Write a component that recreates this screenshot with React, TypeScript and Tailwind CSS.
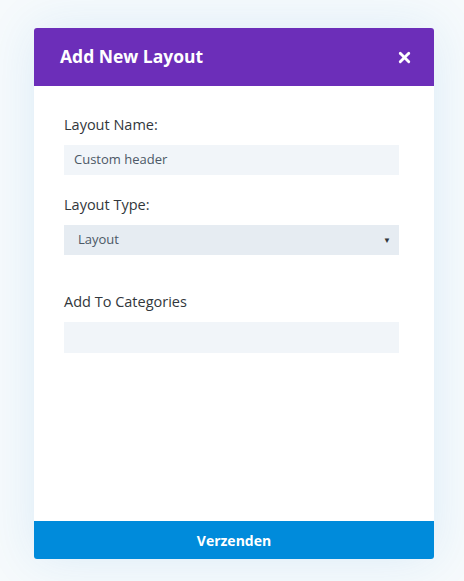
import { X } from "lucide-react";

export default function App() {
  return (
    <div
      className="w-full h-[581px] bg-[#f6fafc] pt-[28px] pl-[34px] overflow-hidden"
      style={{ fontFamily: '"Open Sans", "Noto Sans", sans-serif' }}
    >
      <div className="w-[400px] h-[531px] flex flex-col rounded-[3px] bg-white shadow-[0_0_50px_rgba(30,130,210,0.12)]">
        {/* Header */}
        <div className="h-[58px] bg-[#6c2eb9] rounded-t-[3px] flex items-center justify-between pl-[26px] pr-[21px]">
          <h1 className="text-[17.5px] font-bold text-white leading-none">Add New Layout</h1>
          <X className="w-[17px] h-[17px] text-white" strokeWidth={4} />
        </div>

        {/* Body */}
        <div className="flex-1 pl-[30px] pr-[35px] pt-[29px]">
          <p className="text-[14.5px] leading-[20px] text-[#32373c]">Layout Name:</p>
          <div className="mt-[10px] h-[30px] bg-[#f1f5f9] flex items-center px-[10px] text-[13px] text-[#4c5866]">
            Custom header
          </div>

          <p className="mt-[20px] text-[14.5px] leading-[20px] text-[#32373c]">Layout Type:</p>
          <div className="mt-[10px] h-[30px] bg-[#e6ecf2] flex items-center justify-between pl-[14px] pr-[8px] text-[13px] text-[#4c5866]">
            <span>Layout</span>
            <span className="text-[8px] text-[#32373c]">▼</span>
          </div>

          <p className="mt-[37px] text-[14.5px] leading-[20px] text-[#32373c]">Add To Categories</p>
          <div className="mt-[10px] h-[31px] bg-[#f1f5f9]" />
        </div>

        {/* Footer */}
        <button className="h-[38px] bg-[#008bdb] rounded-b-[3px] text-white text-[14px] font-bold">
          Verzenden
        </button>
      </div>
    </div>
  );
}
